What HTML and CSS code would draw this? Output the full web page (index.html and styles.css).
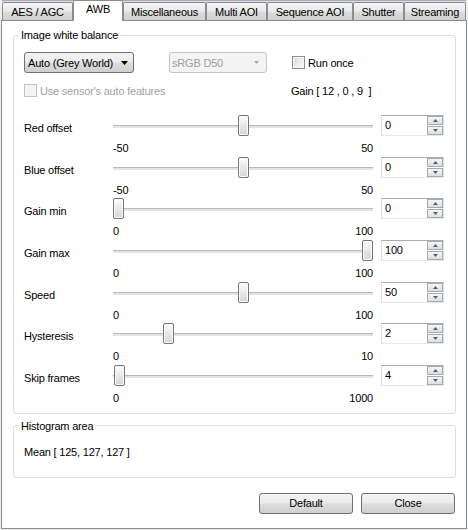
FILE: index.html
```html
<!DOCTYPE html>
<html>
<head>
<meta charset="utf-8">
<title>AWB</title>
<link rel="stylesheet" href="styles.css">
</head>
<body>
<div class="tabs">
  <div class="tab t-aes">AES / AGC</div>
  <div class="tab sel t-awb">AWB</div>
  <div class="tab t-misc">Miscellaneous</div>
  <div class="tab t-multi">Multi AOI</div>
  <div class="tab t-seq">Sequence AOI</div>
  <div class="tab t-shut">Shutter</div>
  <div class="tab t-stream">Streaming</div>
</div>
<div class="page">
  <fieldset class="group wb">
    <legend>Image white balance</legend>
    <div class="toprow">
      <div class="combo"><span class="ctext">Auto (Grey World)</span><svg class="carrow" width="7" height="4" viewBox="0 0 7 4"><path d="M0 0h7L3.5 4z"/></svg></div>
      <div class="combo disabled"><span class="ctext">sRGB D50</span><svg class="carrow" width="7" height="4" viewBox="0 0 7 4"><path d="M1 0h5L3.5 3z"/></svg></div>
      <label class="check runonce"><span class="box"></span>Run once</label>
    </div>
    <div class="secondrow">
      <label class="check disabled sensor"><span class="box"></span>Use sensor's auto features</label>
      <span class="gain">Gain [ 12 , 0 , 9&nbsp; ]</span>
    </div>
    <div class="sliders">
      <div class="srow">
        <div class="slabel">Red offset</div>
        <div class="slider"><div class="track"></div><div class="thumb" style="left:124.5px"></div></div>
        <div class="spin"><span class="val">0</span><div class="spinbtns"><b><svg width="5" height="3" viewBox="0 0 5 3"><path d="M0 3h5L2.5 0z"/></svg></b><b><svg width="5" height="3" viewBox="0 0 5 3"><path d="M0 0h5L2.5 3z"/></svg></b></div></div>
        <div class="range"><span>-50</span><span>50</span></div>
      </div>
      <div class="srow">
        <div class="slabel">Blue offset</div>
        <div class="slider"><div class="track"></div><div class="thumb" style="left:124.5px"></div></div>
        <div class="spin"><span class="val">0</span><div class="spinbtns"><b><svg width="5" height="3" viewBox="0 0 5 3"><path d="M0 3h5L2.5 0z"/></svg></b><b><svg width="5" height="3" viewBox="0 0 5 3"><path d="M0 0h5L2.5 3z"/></svg></b></div></div>
        <div class="range"><span>-50</span><span>50</span></div>
      </div>
      <div class="srow">
        <div class="slabel">Gain min</div>
        <div class="slider"><div class="track"></div><div class="thumb" style="left:0px"></div></div>
        <div class="spin"><span class="val">0</span><div class="spinbtns"><b><svg width="5" height="3" viewBox="0 0 5 3"><path d="M0 3h5L2.5 0z"/></svg></b><b><svg width="5" height="3" viewBox="0 0 5 3"><path d="M0 0h5L2.5 3z"/></svg></b></div></div>
        <div class="range"><span>0</span><span>100</span></div>
      </div>
      <div class="srow">
        <div class="slabel">Gain max</div>
        <div class="slider"><div class="track"></div><div class="thumb" style="left:249px"></div></div>
        <div class="spin"><span class="val">100</span><div class="spinbtns"><b><svg width="5" height="3" viewBox="0 0 5 3"><path d="M0 3h5L2.5 0z"/></svg></b><b><svg width="5" height="3" viewBox="0 0 5 3"><path d="M0 0h5L2.5 3z"/></svg></b></div></div>
        <div class="range"><span>0</span><span>100</span></div>
      </div>
      <div class="srow">
        <div class="slabel">Speed</div>
        <div class="slider"><div class="track"></div><div class="thumb" style="left:124.5px"></div></div>
        <div class="spin"><span class="val">50</span><div class="spinbtns"><b><svg width="5" height="3" viewBox="0 0 5 3"><path d="M0 3h5L2.5 0z"/></svg></b><b><svg width="5" height="3" viewBox="0 0 5 3"><path d="M0 0h5L2.5 3z"/></svg></b></div></div>
        <div class="range"><span>0</span><span>100</span></div>
      </div>
      <div class="srow">
        <div class="slabel">Hysteresis</div>
        <div class="slider"><div class="track"></div><div class="thumb" style="left:49.8px"></div></div>
        <div class="spin"><span class="val">2</span><div class="spinbtns"><b><svg width="5" height="3" viewBox="0 0 5 3"><path d="M0 3h5L2.5 0z"/></svg></b><b><svg width="5" height="3" viewBox="0 0 5 3"><path d="M0 0h5L2.5 3z"/></svg></b></div></div>
        <div class="range"><span>0</span><span>10</span></div>
      </div>
      <div class="srow">
        <div class="slabel">Skip frames</div>
        <div class="slider"><div class="track"></div><div class="thumb" style="left:1px"></div></div>
        <div class="spin"><span class="val">4</span><div class="spinbtns"><b><svg width="5" height="3" viewBox="0 0 5 3"><path d="M0 3h5L2.5 0z"/></svg></b><b><svg width="5" height="3" viewBox="0 0 5 3"><path d="M0 0h5L2.5 3z"/></svg></b></div></div>
        <div class="range"><span>0</span><span>1000</span></div>
      </div>
    </div>
  </fieldset>
  <fieldset class="group hist">
    <legend>Histogram area</legend>
    <div class="mean">Mean [ 125, 127, 127 ]</div>
  </fieldset>
  <div class="btnrow">
    <button class="btn">Default</button>
    <button class="btn">Close</button>
  </div>
</div>
</body>
</html>
```
FILE: styles.css
```css
* { box-sizing: border-box; }
body {
  margin: 0;
  width: 468px;
  height: 530px;
  overflow: hidden;
  background: #f0f0f0;
  font: 11px "Liberation Sans", Arial, sans-serif;
  letter-spacing: -0.2px;
  color: #000;
}
.tabs {
  display: flex;
  align-items: flex-end;
  height: 20px;
  margin-left: 2px;
  position: relative;
  z-index: 1;
  background: linear-gradient(#a9abb2, #a9abb2) no-repeat 0 0 / 464px 1px,
              linear-gradient(#dedede, #dedede) no-repeat 0 1px / 464px 1px;
}
.tab {
  height: 18px;
  border: 1px solid #898c95;
  border-bottom: 0;
  border-radius: 2px 2px 0 0;
  background: linear-gradient(#f3f3f3 0%, #ebebeb 48%, #dddddd 52%, #d0d0d0 100%);
  text-align: center;
  line-height: 18px;
  white-space: nowrap;
}
.tab.sel {
  height: 21px;
  margin-bottom: -1px;
  background: #fff;
  line-height: 17px;
}
.t-aes { width: 71px; }
.t-awb { width: 50px; }
.t-misc { width: 83px; }
.t-multi { width: 61px; }
.t-seq { width: 86px; }
.t-shut { width: 51px; }
.t-stream { width: 62px; }

.page {
  margin-left: 1px;
  width: 466px;
  height: 509px;
  border: 1px solid #898c95;
  background: #fff;
  padding: 0 10px 0 11px;
}
.group {
  margin: 0;
  min-width: 0;
  border: 1px solid #d5dfe5;
  border-radius: 3px;
}
.group legend {
  padding: 0 2px;
  margin-left: -5px;
  line-height: 12px;
}
.wb {
  margin-top: 8px;
  padding: 11px 11px 6px 10px;
}
.toprow {
  display: flex;
  align-items: center;
  height: 21px;
}
.combo {
  display: flex;
  align-items: center;
  width: 110px;
  height: 21px;
  border: 1px solid #707070;
  border-radius: 3px;
  background: linear-gradient(#f3f3f3 0%, #ebebeb 48%, #dddddd 52%, #d0d0d0 100%);
  padding-left: 3px;
}
.combo .ctext { flex: 1; white-space: nowrap; }
.combo .carrow { margin-right: 5px; fill: #000; }
.combo.disabled {
  width: 98px;
  margin-left: 35px;
  border-color: #c5c5c5;
  background: #f4f4f4;
  color: #a0a0a0;
  padding-left: 2px;
}
.combo.disabled .carrow { fill: #a8a8a8; margin-right: 6px; }
.check {
  display: flex;
  align-items: center;
  gap: 3px;
  white-space: nowrap;
}
.check .box {
  width: 13px;
  height: 13px;
  border: 1px solid #8e8f8f;
  background: linear-gradient(135deg, #dcdcdc, #fafafa);
  box-shadow: inset 0 0 0 1px #f4f4f4;
}
.runonce { margin-left: 25px; }
.secondrow {
  display: flex;
  align-items: center;
  height: 13px;
  margin-top: 11px;
}
.sensor { width: 267px; }
.check.disabled { color: #a0a0a0; }
.check.disabled .box {
  border-color: #c4c4c4;
  background: #f4f4f4;
  box-shadow: none;
}
.sliders { margin-top: 18px; }
.srow {
  display: grid;
  grid-template-columns: 89px 260px 71px;
  grid-template-rows: 21px auto;
  height: 41.67px;
}
.slabel {
  padding-top: 7px;
  line-height: 13px;
}
.slider { position: relative; }
.track {
  margin-top: 10px;
  height: 3px;
  background: linear-gradient(#b9b9b9 1px, #e4e4e4 1px);
}
.thumb {
  position: absolute;
  top: 0;
  width: 11px;
  height: 21px;
  border: 1px solid #777;
  border-radius: 2px;
  background: linear-gradient(#fdfdfd, #e4e4e4 60%, #d6d6d6);
  box-shadow: inset 0 0 0 1px #fbfbfb;
}
.spin {
  justify-self: end;
  display: flex;
  width: 63px;
  height: 21px;
  border: 1px solid;
  border-color: #abadb3 #dbdfe6 #e3e9ef #dbdfe6;
  background: #fff;
}
.spin .val {
  flex: 1;
  padding-left: 3px;
  line-height: 19px;
}
.spinbtns {
  width: 16px;
  display: flex;
  flex-direction: column;
  gap: 1px;
}
.spinbtns b {
  flex: 1;
  display: flex;
  align-items: center;
  justify-content: center;
  border: 1px solid #a7a9ae;
  background: linear-gradient(#f6f6f6, #dedede);
}
.spinbtns svg { fill: #4d6185; }
.range {
  grid-column: 2;
  display: flex;
  justify-content: space-between;
  margin-top: 6px;
  line-height: 13px;
}
.hist {
  margin-top: 6px;
  padding: 14px 10px 18px 10px;
}
.mean { line-height: 13px; }
.btnrow {
  display: flex;
  justify-content: flex-end;
  gap: 8px;
  margin-top: 15px;
  padding-right: 1px;
}
.btn {
  width: 94px;
  height: 21px;
  padding: 0;
  border: 1px solid #707070;
  border-radius: 3px;
  background: linear-gradient(#f3f3f3 0%, #ebebeb 48%, #dddddd 52%, #d0d0d0 100%);
  font: 11px "Liberation Sans", Arial, sans-serif;
  letter-spacing: -0.2px;
  color: #000;
  line-height: 19px;
}
```
